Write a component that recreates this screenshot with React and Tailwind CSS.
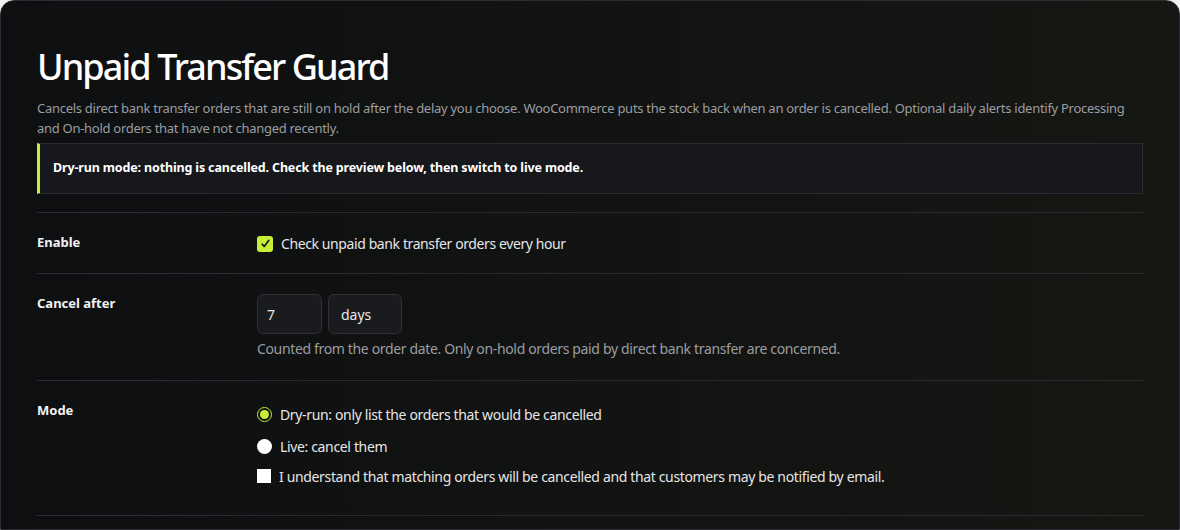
import React from "react";

export default function App() {
  return (
    <div className="min-h-[530px] bg-[#f0f0f1]" style={{ fontFamily: '"Noto Sans", "Open Sans", sans-serif' }}>
      <div className="h-[530px] overflow-hidden rounded-t-[14px] border border-[#2c2d30] bg-gradient-to-r from-[#0e0f11] to-[#151713] px-[36px] pt-[44px]">
        <h1 className="text-[36px] font-medium leading-[44px] tracking-[-1.9px] text-white">Unpaid Transfer Guard</h1>
        <p className="mt-[9px] text-[13px] leading-[20px] tracking-[-0.28px] text-[#9b9da1]">
          Cancels direct bank transfer orders that are still on hold after the delay you choose. WooCommerce puts the stock back when an order is cancelled. Optional daily alerts identify Processing and On-hold orders that have not changed recently.
        </p>
        <div className="mt-[5px] flex h-[51px] items-center border border-l-[3px] border-[#2a2b30] border-l-[#c6ef3a] bg-[#17181c] pl-[13px] text-[12.5px] font-bold tracking-[-0.15px] text-white">
          Dry-run mode: nothing is cancelled. Check the preview below, then switch to live mode.
        </div>
        <div className="mt-[18px]">
          <div className="flex h-[61px] border-t border-[#2a2b2e]">
            <div className="w-[220px] shrink-0 pt-[20px] text-[13px] font-bold text-[#f2f2f2]">Enable</div>
            <label className="flex items-center gap-[8px] self-start pt-[20px] text-[14px] tracking-[-0.4px] text-[#e6e6e6]">
              <span className="flex h-[16px] w-[16px] items-center justify-center rounded-[3px] bg-[#c6ef3a]">
                <svg viewBox="0 0 12 12" className="h-[11px] w-[11px]"><path d="M2.5 6.8 L4.6 9.2 L9.5 2.6" fill="none" stroke="#111" strokeWidth="1.8" strokeLinecap="round" strokeLinejoin="round" /></svg>
              </span>
              Check unpaid bank transfer orders every hour
            </label>
          </div>
          <div className="flex h-[107px] border-t border-[#2a2b2e]">
            <div className="w-[220px] shrink-0 pt-[20px] text-[13px] font-bold text-[#f2f2f2]">Cancel after</div>
            <div className="pt-[20px]">
              <div className="flex gap-[6px]">
                <div className="flex h-[40px] w-[65px] items-center rounded-[6px] border border-[#303135] bg-[#1a1b1e] pl-[9px] text-[14px] text-[#e6e6e6]">7</div>
                <div className="flex h-[40px] w-[74px] items-center rounded-[6px] border border-[#303135] bg-[#1a1b1e] pl-[12px] text-[14px] text-[#e6e6e6]">days</div>
              </div>
              <p className="mt-[4px] text-[14px] tracking-[-0.35px] text-[#9b9da1]">Counted from the order date. Only on-hold orders paid by direct bank transfer are concerned.</p>
            </div>
          </div>
          <div className="flex h-[136px] border-y border-[#2a2b2e]">
            <div className="w-[220px] shrink-0 pt-[20px] text-[13px] font-bold text-[#f2f2f2]">Mode</div>
            <div className="flex flex-col pt-[23px] text-[14px] tracking-[-0.35px] text-[#e6e6e6]">
              <label className="flex h-[20px] items-center gap-[8px]">
                <span className="flex h-[15px] w-[15px] items-center justify-center rounded-full border-[1.5px] border-[#c6ef3a] bg-[#111]">
                  <span className="h-[9px] w-[9px] rounded-full bg-[#c6ef3a]" />
                </span>
                Dry-run: only list the orders that would be cancelled
              </label>
              <label className="mt-[12px] flex h-[20px] items-center gap-[8px]">
                <span className="h-[15px] w-[15px] rounded-full bg-white" />
                Live: cancel them
              </label>
              <label className="mt-[10px] flex h-[20px] items-center gap-[8px]">
                <span className="h-[14px] w-[14px] bg-white" />
                I understand that matching orders will be cancelled and that customers may be notified by email.
              </label>
            </div>
          </div>
        </div>
      </div>
    </div>
  );
}
